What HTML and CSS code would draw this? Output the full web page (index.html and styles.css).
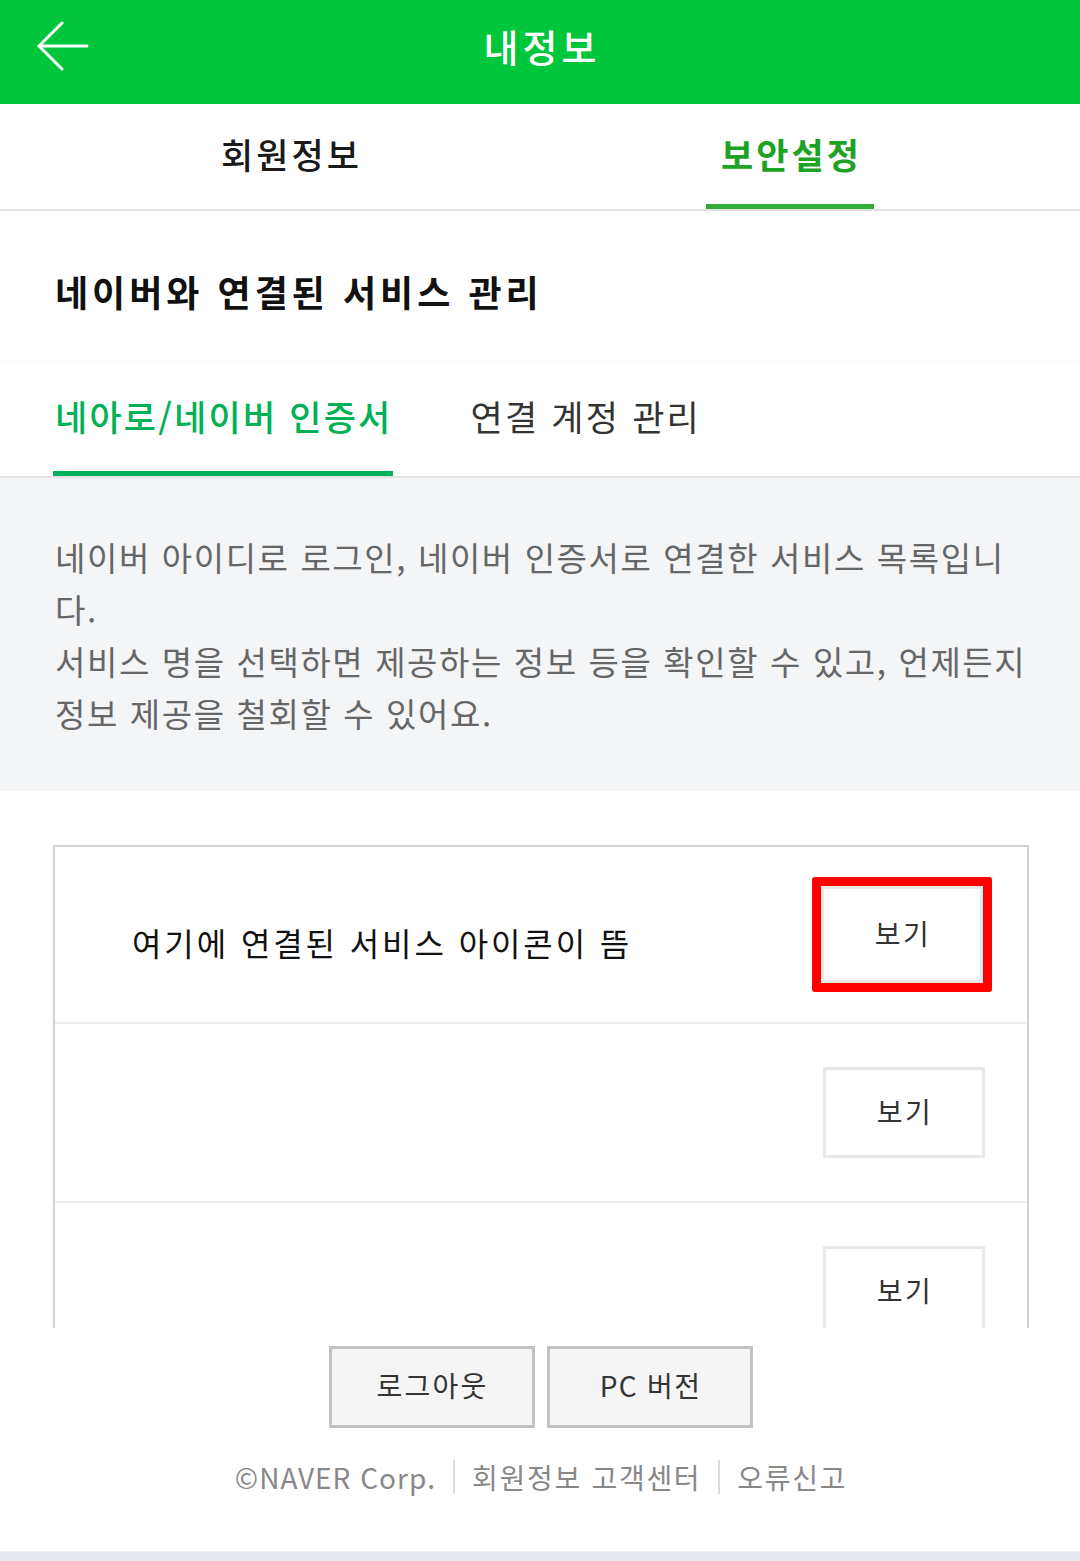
FILE: index.html
```html
<!DOCTYPE html>
<html lang="ko">
<head>
<meta charset="utf-8">
<title>내정보</title>
<link rel="stylesheet" href="styles.css">
</head>
<body>
<div class="page">
  <header class="appbar">
    <a class="back" href="#" aria-label="뒤로">
      <svg width="52" height="50" viewBox="0 0 52 50" fill="none" stroke="#fff" stroke-width="3" stroke-linecap="round" stroke-linejoin="round">
        <path d="M2 25 H50"/>
        <path d="M25 2 L2 25 L25 48"/>
      </svg>
    </a>
    <h1 class="appbar-title">내정보</h1>
  </header>

  <nav class="tabs">
    <div class="tab"><span class="tab-label">회원정보</span></div>
    <div class="tab"><span class="tab-label is-active">보안설정</span></div>
  </nav>

  <h2 class="section-title">네이버와 연결된 서비스 관리</h2>

  <nav class="subtabs">
    <span class="subtab is-active">네아로/네이버 인증서</span>
    <span class="subtab">연결 계정 관리</span>
  </nav>

  <div class="desc">
    <p>네이버 아이디로 로그인, 네이버 인증서로 연결한 서비스 목록입니다.<br>서비스 명을 선택하면 제공하는 정보 등을 확인할 수 있고, 언제든지 정보 제공을 철회할 수 있어요.</p>
  </div>

  <div class="list-clip">
    <ul class="list">
      <li class="row">
        <span class="row-name">여기에 연결된 서비스 아이콘이 뜸</span>
        <button class="view-btn is-marked" type="button">보기</button>
      </li>
      <li class="row">
        <span class="row-name"></span>
        <button class="view-btn" type="button">보기</button>
      </li>
      <li class="row">
        <span class="row-name"></span>
        <button class="view-btn" type="button">보기</button>
      </li>
    </ul>
  </div>

  <div class="foot-buttons">
    <button class="foot-btn" type="button">로그아웃</button>
    <button class="foot-btn foot-btn-pc" type="button">PC 버전</button>
  </div>

  <div class="foot-links">
    <span class="corp">©NAVER Corp.</span>
    <span class="sep"></span>
    <span>회원정보 고객센터</span>
    <span class="sep"></span>
    <span>오류신고</span>
  </div>

  <div class="bottom-strip"></div>
</div>
</body>
</html>
```

FILE: styles.css
```css
* { box-sizing: border-box; }

html, body {
  margin: 0;
  padding: 0;
  background: #fff;
}

body {
  font-family: "Noto Sans CJK KR", "Noto Sans", "Liberation Sans", sans-serif;
  color: #222;
}

.page {
  width: 1080px;
  min-height: 1561px;
  display: flex;
  flex-direction: column;
}

/* App bar */
.appbar {
  height: 104px;
  background: #00c63b;
  display: flex;
  align-items: center;
  justify-content: center;
  position: relative;
}

.back {
  position: absolute;
  left: 37px;
  top: 21px;
  width: 52px;
  height: 50px;
  display: block;
}

.back svg { display: block; }

.appbar-title {
  margin: 0 0 12px 4px;
  font-size: 38px;
  font-weight: 500;
  color: #fff;
  line-height: 50px;
  letter-spacing: 4px;
}

/* Main tabs */
.tabs {
  height: 107px;
  display: flex;
  padding: 0 40px;
  border-bottom: 2px solid #e3e3e3;
}

.tab {
  flex: 1;
  display: flex;
  justify-content: center;
}

.tab-label {
  height: 105px;
  padding: 0 12px 0 15px;
  display: flex;
  align-items: center;
  font-size: 35px;
  line-height: 40px;
  font-weight: 500;
  color: #1a1a1a;
  border-bottom: 5px solid transparent;
  letter-spacing: 3px;
}

.tab-label.is-active {
  color: #1ea223;
  font-weight: 700;
  border-bottom-color: #33ad3a;
}

/* Section title */
.section-title {
  margin: 0;
  height: 149px;
  padding: 55px 0 0 55px;
  font-size: 36px;
  line-height: 50px;
  font-weight: 700;
  color: #111;
  letter-spacing: 4px;
}

/* Sub tabs */
.subtabs {
  height: 118px;
  display: flex;
  gap: 76px;
  padding-left: 53px;
  border-top: 1px solid #fbfbfb;
  border-bottom: 2px solid #e3e3e3;
}

.subtab {
  display: flex;
  align-items: center;
  padding: 0 0 0 2px;
  font-size: 35px;
  line-height: 40px;
  color: #333;
  border-bottom: 5px solid transparent;
  letter-spacing: 2.2px;
}

.subtab.is-active {
  color: #00b156;
  font-weight: 500;
  border-bottom-color: #00b35a;
  letter-spacing: 2.2px;
}

/* Description */
.desc {
  height: 313px;
  background: #f4f5f7;
  padding: 53px 44px 0 55px;
}

.desc p {
  margin: 0;
  font-size: 33px;
  line-height: 52px;
  color: #666;
  letter-spacing: 1.6px;
}

/* List */
.list-clip {
  margin: 54px 51px 0 53px;
  height: 483px;
  overflow: hidden;
}

.list {
  list-style: none;
  margin: 0;
  padding: 0;
  border: 2px solid #d2d2d2;
}

.row {
  height: 179px;
  display: flex;
  align-items: center;
  justify-content: space-between;
  padding: 0 42px 0 77px;
  border-bottom: 2px solid #eeeeee;
}

.row:first-child { height: 177px; }

.row-name {
  font-size: 32px;
  line-height: 40px;
  color: #111;
  padding-top: 14px;
  letter-spacing: 2.9px;
}

.view-btn {
  width: 162px;
  height: 91px;
  border: 3px solid #e8e8e8;
  background: #fff;
  font-family: inherit;
  font-size: 28px;
  color: #333;
  padding: 0 0 4px 2px;
  letter-spacing: 2.5px;
  cursor: pointer;
}

.view-btn.is-marked {
  width: 180px;
  height: 115px;
  border: 9px solid #ff0000;
  border-radius: 3px;
  box-shadow: inset 0 0 0 3px #e8e8e8;
  margin-right: -7px;
}

/* Footer buttons */
.foot-buttons {
  display: flex;
  justify-content: center;
  gap: 12px;
  margin-top: 18px;
  padding-left: 1px;
}

.foot-btn {
  width: 206px;
  height: 82px;
  border: 3px solid #c2c2c2;
  background: #f5f5f5;
  font-family: inherit;
  font-size: 28px;
  color: #333;
  padding: 0 0 4px 2px;
  letter-spacing: 2.2px;
}

.foot-btn-pc { letter-spacing: 1.3px; }

/* Footer links */
.foot-links {
  display: flex;
  justify-content: center;
  align-items: center;
  gap: 17px;
  margin-top: 30px;
  font-size: 28px;
  line-height: 38px;
  color: #888;
  letter-spacing: 1.7px;
  padding-left: 2px;
}

.foot-links .corp { letter-spacing: 1px; }

.sep {
  width: 2px;
  height: 34px;
  background: #dcdcdc;
}

.bottom-strip {
  margin-top: auto;
  height: 10px;
  background: #e6eaee;
  border-top: 1px solid #edf0f2;
}
```
